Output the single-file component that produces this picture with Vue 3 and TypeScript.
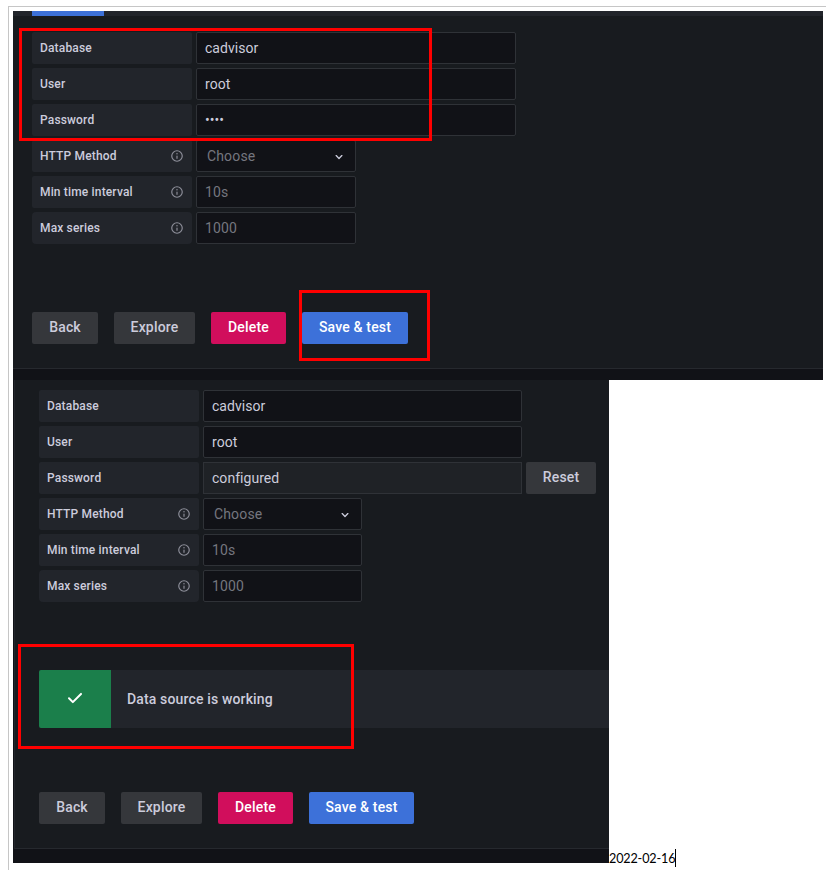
<script setup lang="ts">
interface Field {
  label: string
  value: string
  kind: 'text' | 'password' | 'readonly' | 'select' | 'hint'
  info?: boolean
}
interface Action {
  label: string
  tone: string
}

const shared: Field[] = [
  { label: 'HTTP Method', value: 'Choose', kind: 'select', info: true },
  { label: 'Min time interval', value: '10s', kind: 'hint', info: true },
  { label: 'Max series', value: '1000', kind: 'hint', info: true },
]
const panels: { id: string; saved: boolean; fields: Field[] }[] = [
  {
    id: 'edit',
    saved: false,
    fields: [
      { label: 'Database', value: 'cadvisor', kind: 'text' },
      { label: 'User', value: 'root', kind: 'text' },
      { label: 'Password', value: '••••', kind: 'password' },
      ...shared,
    ],
  },
  {
    id: 'saved',
    saved: true,
    fields: [
      { label: 'Database', value: 'cadvisor', kind: 'text' },
      { label: 'User', value: 'root', kind: 'text' },
      { label: 'Password', value: 'configured', kind: 'readonly' },
      ...shared,
    ],
  },
]
const actions: Action[] = [
  { label: 'Back', tone: 'back' },
  { label: 'Explore', tone: 'explore' },
  { label: 'Delete', tone: 'delete' },
  { label: 'Save & test', tone: 'save' },
]
</script>

<template>
  <main class="page">
    <section v-for="p in panels" :key="p.id" class="panel" :class="p.id">
      <div v-if="!p.saved" class="tabs"><span class="tab"></span></div>
      <div class="body">
        <div class="fields">
          <div v-for="f in p.fields" :key="f.label" class="row">
            <div class="label">
              <span>{{ f.label }}</span>
              <svg v-if="f.info" class="info" viewBox="0 0 24 24" fill="currentColor">
                <path d="M12 2a10 10 0 1 0 0 20 10 10 0 0 0 0-20Zm0 18a8 8 0 1 1 0-16 8 8 0 0 1 0 16Zm0-9a1 1 0 0 0-1 1v4a1 1 0 0 0 2 0v-4a1 1 0 0 0-1-1Zm0-4a1.25 1.25 0 1 0 0 2.5A1.25 1.25 0 0 0 12 7Z" />
              </svg>
            </div>
            <div class="control" :class="f.kind">
              <span>{{ f.value }}</span>
              <svg v-if="f.kind === 'select'" class="chevron" viewBox="0 0 24 24" fill="currentColor">
                <path d="M17 9.17a1 1 0 0 0-1.41 0L12 12.71 8.46 9.17a1 1 0 0 0-1.41 1.42l4.24 4.24a1 1 0 0 0 1.42 0L17 10.59a1 1 0 0 0 0-1.42Z" />
              </svg>
            </div>
            <button v-if="f.kind === 'readonly'" class="btn reset">Reset</button>
          </div>
        </div>
        <div v-if="p.saved" class="alert">
          <div class="alert-icon">
            <svg viewBox="0 0 24 24" fill="currentColor">
              <path d="M18.71 7.21a1 1 0 0 0-1.42 0l-7.45 7.46-3.13-3.14A1 1 0 1 0 5.29 13l3.84 3.84a1 1 0 0 0 1.42 0l8.16-8.16a1 1 0 0 0 0-1.47Z" />
            </svg>
          </div>
          <div class="alert-text">Data source is working</div>
        </div>
        <div class="actions">
          <button v-for="a in actions" :key="a.label" class="btn" :class="a.tone">{{ a.label }}</button>
        </div>
      </div>
    </section>
    <div class="date">2022-02-16</div>
    <i class="mark mark-fields"></i>
    <i class="mark mark-save"></i>
    <i class="mark mark-alert"></i>
  </main>
</template>

<style>
body {
  margin: 0;
  background: #fff;
}
</style>

<style scoped>
* {
  box-sizing: border-box;
}
.page {
  position: relative;
  width: 826px;
  height: 870px;
  overflow: hidden;
  padding: 11px 0 0 13px;
  display: grid;
  grid-template-columns: 596px 1fr;
  grid-template-rows: 369px 483px;
  font-family: Roboto, "Liberation Sans", sans-serif;
  color: #ccccdc;
}
.page::before {
  content: "";
  position: absolute;
  left: 8px;
  top: 6px;
  right: 0;
  bottom: 0;
  border: solid #c6c6c6;
  border-width: 1px 0 0 1px;
}
.panel {
  background: #111217;
  overflow: hidden;
}
.edit {
  grid-column: 1 / 3;
  width: 810px;
}
.tabs {
  height: 5px;
  padding-left: 19px;
  background: #22252b;
}
.tab {
  display: block;
  width: 72px;
  height: 5px;
  background: #3d71d9;
}
.body {
  background: #181b1f;
  border-bottom: 1px solid #26292e;
}
.edit .body {
  height: 353px;
  padding: 16px 0 0 19px;
}
.saved {
  padding-left: 1px;
}
.saved .body {
  height: 469px;
  padding: 10px 0 0 24px;
  border-left: 1px solid #22252b;
}
.fields {
  display: flex;
  flex-direction: column;
  gap: 4px;
}
.row {
  display: flex;
  gap: 4px;
  height: 32px;
}
.label {
  width: 160px;
  padding: 0 8px;
  display: flex;
  align-items: center;
  justify-content: space-between;
  background: #22252b;
  border-radius: 2px;
  font-size: 12px;
  font-weight: 500;
  letter-spacing: 0.16px;
}
.row:last-child .label {
  border-radius: 4px;
}
.info {
  width: 14px;
  height: 14px;
  color: #8e8f9a;
}
.control {
  width: 320px;
  padding: 0 8px;
  display: flex;
  align-items: center;
  justify-content: space-between;
  background: #111217;
  border: 1px solid #2f3237;
  border-radius: 2px;
  font-size: 14px;
  line-height: 16px;
  letter-spacing: 0.04px;
}
.saved .control {
  width: 319px;
}
.control.select,
.control.hint {
  width: 160px;
  color: #75767f;
  letter-spacing: 0.13px;
}
.saved .control.select,
.saved .control.hint {
  width: 159px;
}
.control.select {
  padding-left: 10px;
  letter-spacing: 0.15px;
}
.control.readonly {
  background: #1f2226;
  border-radius: 0;
}
.control.password {
  font-size: 14px;
  letter-spacing: 0;
}
.chevron {
  width: 16px;
  height: 16px;
  margin-top: 2px;
  color: #ccccdc;
}
.btn {
  height: 32px;
  padding: 0 0 2px;
  border: 0;
  border-radius: 2px;
  background: #35373b;
  color: #ccccdc;
  font: 500 14px/30px Roboto, "Liberation Sans", sans-serif;
  letter-spacing: 0.17px;
}
.reset {
  width: 70px;
}
.alert {
  display: flex;
  height: 58px;
  margin-top: 68px;
  background: #22252b;
  border-radius: 2px 0 0 2px;
  overflow: hidden;
}
.alert-icon {
  width: 72px;
  padding-bottom: 2px;
  display: flex;
  align-items: center;
  justify-content: center;
  background: #1b7f4b;
  color: #fff;
}
.alert-icon svg {
  width: 24px;
  height: 24px;
}
.alert-text {
  padding-left: 16px;
  font-size: 14px;
  font-weight: 500;
  line-height: 58px;
  letter-spacing: 0.15px;
}
.actions {
  display: flex;
  gap: 16px;
  margin-top: 68px;
}
.saved .actions {
  margin-top: 64px;
}
.back {
  width: 66px;
}
.explore {
  width: 81px;
}
.delete {
  width: 75px;
  background: #d10e5c;
  color: #fff;
}
.save {
  width: 106px;
  background: #3d71d9;
  color: #fff;
}
.saved .save {
  width: 105px;
}
.date {
  align-self: end;
  justify-self: start;
  height: 18px;
  margin-bottom: -4px;
  border-right: 1px solid #000;
  color: #000;
  font: 12.6px/20px Lato, Carlito, sans-serif;
  letter-spacing: -0.15px;
  width: 67px;
  white-space: nowrap;
}
.mark {
  position: absolute;
  border: 3px solid #f00;
}
.mark-fields {
  left: 19px;
  top: 28px;
  width: 413px;
  height: 113px;
}
.mark-save {
  left: 299px;
  top: 290px;
  width: 131px;
  height: 71px;
}
.mark-alert {
  left: 18px;
  top: 644px;
  width: 336px;
  height: 105px;
}
</style>
